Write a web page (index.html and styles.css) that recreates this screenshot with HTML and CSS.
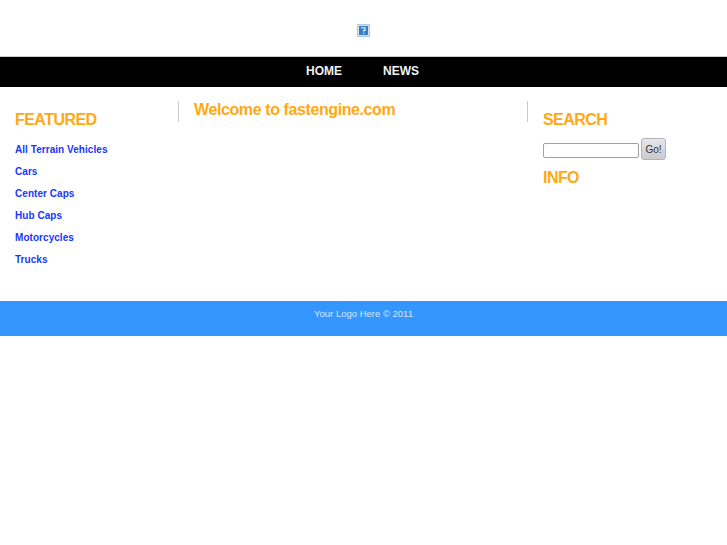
FILE: index.html
```html
<!DOCTYPE html>
<html lang="en">
<head>
<meta charset="utf-8">
<title>fastengine.com</title>
<link rel="stylesheet" href="styles.css">
</head>
<body>
<header class="logo">
<svg class="broken" width="13" height="13" viewBox="0 0 13 13" aria-hidden="true">
<rect x="0.5" y="0.5" width="12" height="12" fill="#cfe0f2" stroke="#b4cbe6"/>
<rect x="2" y="2" width="9" height="9" fill="#3a7fc4"/>
<path d="M4.8 4.6 V3.8 H8 V6.4 H6.6 V7.6" fill="none" stroke="#eaf2fb" stroke-width="1.1"/>
<rect x="6" y="8.6" width="1.2" height="1.2" fill="#eaf2fb"/>
</svg>
</header>
<nav class="nav">
<a href="#">HOME</a>
<a href="#">NEWS</a>
</nav>
<main class="content">
<aside class="left">
<h2>FEATURED</h2>
<ul>
<li><a href="#">All Terrain Vehicles</a></li>
<li><a href="#">Cars</a></li>
<li><a href="#">Center Caps</a></li>
<li><a href="#">Hub Caps</a></li>
<li><a href="#">Motorcycles</a></li>
<li><a href="#">Trucks</a></li>
</ul>
</aside>
<section class="middle">
<h1>Welcome to fastengine.com</h1>
</section>
<aside class="right">
<h2>SEARCH</h2>
<form class="search">
<input type="text" class="field">
<button type="button" class="go">Go!</button>
</form>
<h2 class="info">INFO</h2>
</aside>
</main>
<footer class="footer">Your Logo Here © 2011</footer>
</body>
</html>
```
FILE: styles.css
```css
* { box-sizing: border-box; }
html, body { margin: 0; padding: 0; background: #fff; }
body { font-family: "Liberation Sans", Arial, sans-serif; }
.logo { height: 56px; display: flex; justify-content: center; padding-top: 24px; }
.broken { display: block; }
.nav { height: 31px; background: #000; border-top: 1px solid #ccc; display: flex; justify-content: center; align-items: center; gap: 41px; padding-right: 2px; padding-bottom: 2px; }
.nav a { color: #f2f2f2; font-size: 12px; font-weight: bold; text-decoration: none; }
.content { display: flex; height: 214px; padding-top: 15px; }
.left { width: 178px; padding-left: 15px; padding-top: 9px; }
h2 { margin: 0; color: #ffa812; font-size: 16px; line-height: 18px; font-weight: bold; letter-spacing: -0.55px; }
.left ul { list-style: none; margin: 10px 0 0; padding: 0; }
.left li { height: 22px; line-height: 22px; font-size: 10px; font-weight: bold; letter-spacing: 0.05px; }
.left a { color: #1836ff; text-decoration: none; }
.middle { width: 350px; margin-top: -1px; height: 21px; border-left: 1px solid #ccc; border-right: 1px solid #ccc; padding-left: 15px; }
h1 { margin: 0; color: #ffa812; font-size: 16px; line-height: 18px; font-weight: bold; letter-spacing: -0.4px; }
.right { padding-left: 15px; padding-top: 9px; }
.search { display: flex; align-items: center; margin-top: 9px; height: 22px; }
.field { width: 96px; height: 15px; margin-top: 2px; border: 1px solid #a0a0a0; border-radius: 2px; background: #fff; padding: 0; }
.go { width: 25px; height: 22px; margin-left: 2px; padding: 0; font: 10px "Liberation Sans", Arial, sans-serif; color: #333; background: linear-gradient(#e6e8ec, #c8cad0); border: 1px solid #b4b4b4; border-radius: 3px; }
.info { margin-top: 9px; }
.footer { height: 35px; background: #3596ff; color: #d6e6f7; font-size: 9.5px; text-align: center; padding-top: 7px; line-height: 11px; }
```
